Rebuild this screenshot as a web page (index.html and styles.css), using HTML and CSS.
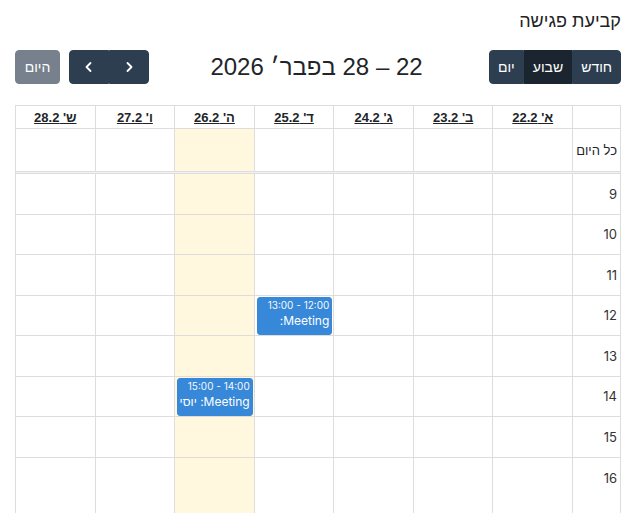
FILE: index.html
```html
<!DOCTYPE html>
<html lang="he" dir="rtl">
<head>
  <meta charset="UTF-8">
  <title>קביעת פגישה</title>
  <link rel="stylesheet" href="styles.css">
</head>
<body>

  <div class="page">
    <h2 class="page-title">קביעת פגישה</h2>

    <div class="toolbar">
      <div class="btn-group">
        <button class="btn">חודש</button>
        <button class="btn active">שבוע</button>
        <button class="btn">יום</button>
      </div>

      <h3 class="cal-title">22 – 28 בפבר׳ 2026</h3>

      <div class="toolbar-left">
        <div class="btn-group">
          <button class="btn btn-icon" aria-label="prev">
            <svg width="10" height="14" viewBox="0 0 10 14"><path d="M3.5 3 L7.5 7 L3.5 11" fill="none" stroke="#fff" stroke-width="1.8" stroke-linecap="round" stroke-linejoin="round"/></svg>
          </button>
          <button class="btn btn-icon" aria-label="next">
            <svg width="10" height="14" viewBox="0 0 10 14"><path d="M6.5 3 L2.5 7 L6.5 11" fill="none" stroke="#fff" stroke-width="1.8" stroke-linecap="round" stroke-linejoin="round"/></svg>
          </button>
        </div>
        <button class="btn btn-today" disabled>היום</button>
      </div>
    </div>

    <div class="cal">
      <div class="cal-head">
        <div class="cell axis"></div>
        <div class="cell day-name"><a href="#">א' 22.2</a></div>
        <div class="cell day-name"><a href="#">ב' 23.2</a></div>
        <div class="cell day-name"><a href="#">ג' 24.2</a></div>
        <div class="cell day-name"><a href="#">ד' 25.2</a></div>
        <div class="cell day-name"><a href="#">ה' 26.2</a></div>
        <div class="cell day-name"><a href="#">ו' 27.2</a></div>
        <div class="cell day-name"><a href="#">ש' 28.2</a></div>

        <div class="cell axis allday-label">כל היום</div>
        <div class="cell"></div>
        <div class="cell"></div>
        <div class="cell"></div>
        <div class="cell"></div>
        <div class="cell today"></div>
        <div class="cell"></div>
        <div class="cell"></div>
      </div>

      <div class="divider"></div>

      <div class="cal-body">
        <div class="col axis-col">
          <div class="slot">9</div>
          <div class="slot">10</div>
          <div class="slot">11</div>
          <div class="slot">12</div>
          <div class="slot">13</div>
          <div class="slot">14</div>
          <div class="slot">15</div>
          <div class="slot">16</div>
        </div>
        <div class="col" id="d22"></div>
        <div class="col" id="d23"></div>
        <div class="col" id="d24"></div>
        <div class="col" id="d25">
          <div class="event" style="top: 122.5px; height: 38px;">
            <div class="event-time">12:00 - 13:00</div>
            <div class="event-title">Meeting: </div>
          </div>
        </div>
        <div class="col today" id="d26">
          <div class="event" style="top: 203.5px; height: 38px;">
            <div class="event-time">14:00 - 15:00</div>
            <div class="event-title">Meeting: יוסי</div>
          </div>
        </div>
        <div class="col" id="d27"></div>
        <div class="col" id="d28"></div>
      </div>
    </div>
  </div>

  <script>
    // ריפוד שורות ריקות בעמודות הימים
    document.querySelectorAll('.cal-body .col:not(.axis-col)').forEach(col => {
      for (let i = 0; i < 8; i++) {
        const slot = document.createElement('div');
        slot.className = 'slot';
        col.insertBefore(slot, col.querySelector('.event'));
      }
    });
  </script>

</body>
</html>
```

FILE: styles.css
```css
html, body {
  overflow: hidden;
}

body {
  font-family: 'Liberation Sans', Arial, sans-serif;
  background-color: #fff;
  color: #212529;
  margin: 0;
  padding: 0;
}

.page {
  padding: 0 15px;
}

.page-title {
  font-size: 18px;
  font-weight: normal;
  color: #222;
  margin: 0;
  padding-top: 10px;
  line-height: 22px;
}

.toolbar {
  display: flex;
  justify-content: space-between;
  align-items: center;
  margin-top: 18px;
  height: 34px;
}

.toolbar-left {
  display: flex;
  align-items: center;
  gap: 9px;
}

.cal-title {
  font-size: 24px;
  font-weight: normal;
  color: #212529;
  margin: 0 5px 0 0;
}

.btn-group {
  display: flex;
}

.btn {
  font-family: 'Liberation Sans', Arial, sans-serif;
  font-size: 14px;
  color: #fff;
  background-color: #2c3e50;
  border: 1px solid #2c3e50;
  height: 34px;
  padding: 0 8px;
  margin: 0;
  cursor: pointer;
  border-radius: 0;
}

.btn-group .btn:first-child {
  border-radius: 0 4px 4px 0;
}

.btn-group .btn:last-child {
  border-radius: 4px 0 0 4px;
}

.btn.active {
  background-color: #1a252f;
  border-color: #1a252f;
}

.btn-icon {
  width: 40px;
  display: flex;
  align-items: center;
  justify-content: center;
}

.btn-today {
  background-color: #77818d;
  border-color: #77818d;
  border-radius: 4px;
  width: 45px;
  padding: 0;
  cursor: default;
}

.cal {
  margin-top: 21px;
}

.cal-head,
.cal-body {
  display: grid;
  grid-template-columns: 47px repeat(7, 1fr);
  gap: 1px;
  background-color: #ddd;
  border: 1px solid #ddd;
}

.cal-head {
  grid-template-rows: 22px 42px;
}

.cal-body {
  border-top: none;
  border-bottom: none;
  height: 400px;
  overflow: hidden;
}

.cell {
  background-color: #fff;
}

.today {
  background-color: #fff8de;
}

.day-name {
  display: flex;
  align-items: center;
  justify-content: center;
}

.day-name a {
  color: #212529;
  font-weight: bold;
  font-size: 13px;
  text-decoration: underline;
}

.allday-label {
  display: flex;
  align-items: center;
  padding-right: 3px;
  font-size: 13px;
  white-space: nowrap;
  color: #212529;
}

.divider {
  height: 1px;
  background-color: #f2f2f2;
  border-bottom: 1px solid #ddd;
  border-left: 1px solid #ddd;
  border-right: 1px solid #ddd;
}

.col {
  position: relative;
  background-color: #fff;
  display: flex;
  flex-direction: column;
}

.col.today {
  background-color: #fff8de;
}

.slot {
  flex: none;
  height: 40.5px;
  box-sizing: border-box;
  border-bottom: 1px solid #ddd;
}

.slot:nth-child(8) {
  border-bottom: none;
}

.axis-col .slot {
  display: flex;
  align-items: center;
  padding-right: 3px;
  font-family: Inter, 'Liberation Sans', sans-serif;
  font-size: 13px;
  color: #333;
}

.event {
  position: absolute;
  left: 2px;
  right: 1px;
  box-sizing: border-box;
  background-color: #3788d8;
  border: 1px solid #3788d8;
  border-radius: 3px;
  color: #fff;
  padding: 1px 2px;
  font-family: Inter, 'Liberation Sans', sans-serif;
  white-space: nowrap;
  overflow: hidden;
}

.event-time {
  font-size: 10px;
  line-height: 13px;
  opacity: 0.95;
}

.event-title {
  font-size: 12px;
  line-height: 18px;
}
```
